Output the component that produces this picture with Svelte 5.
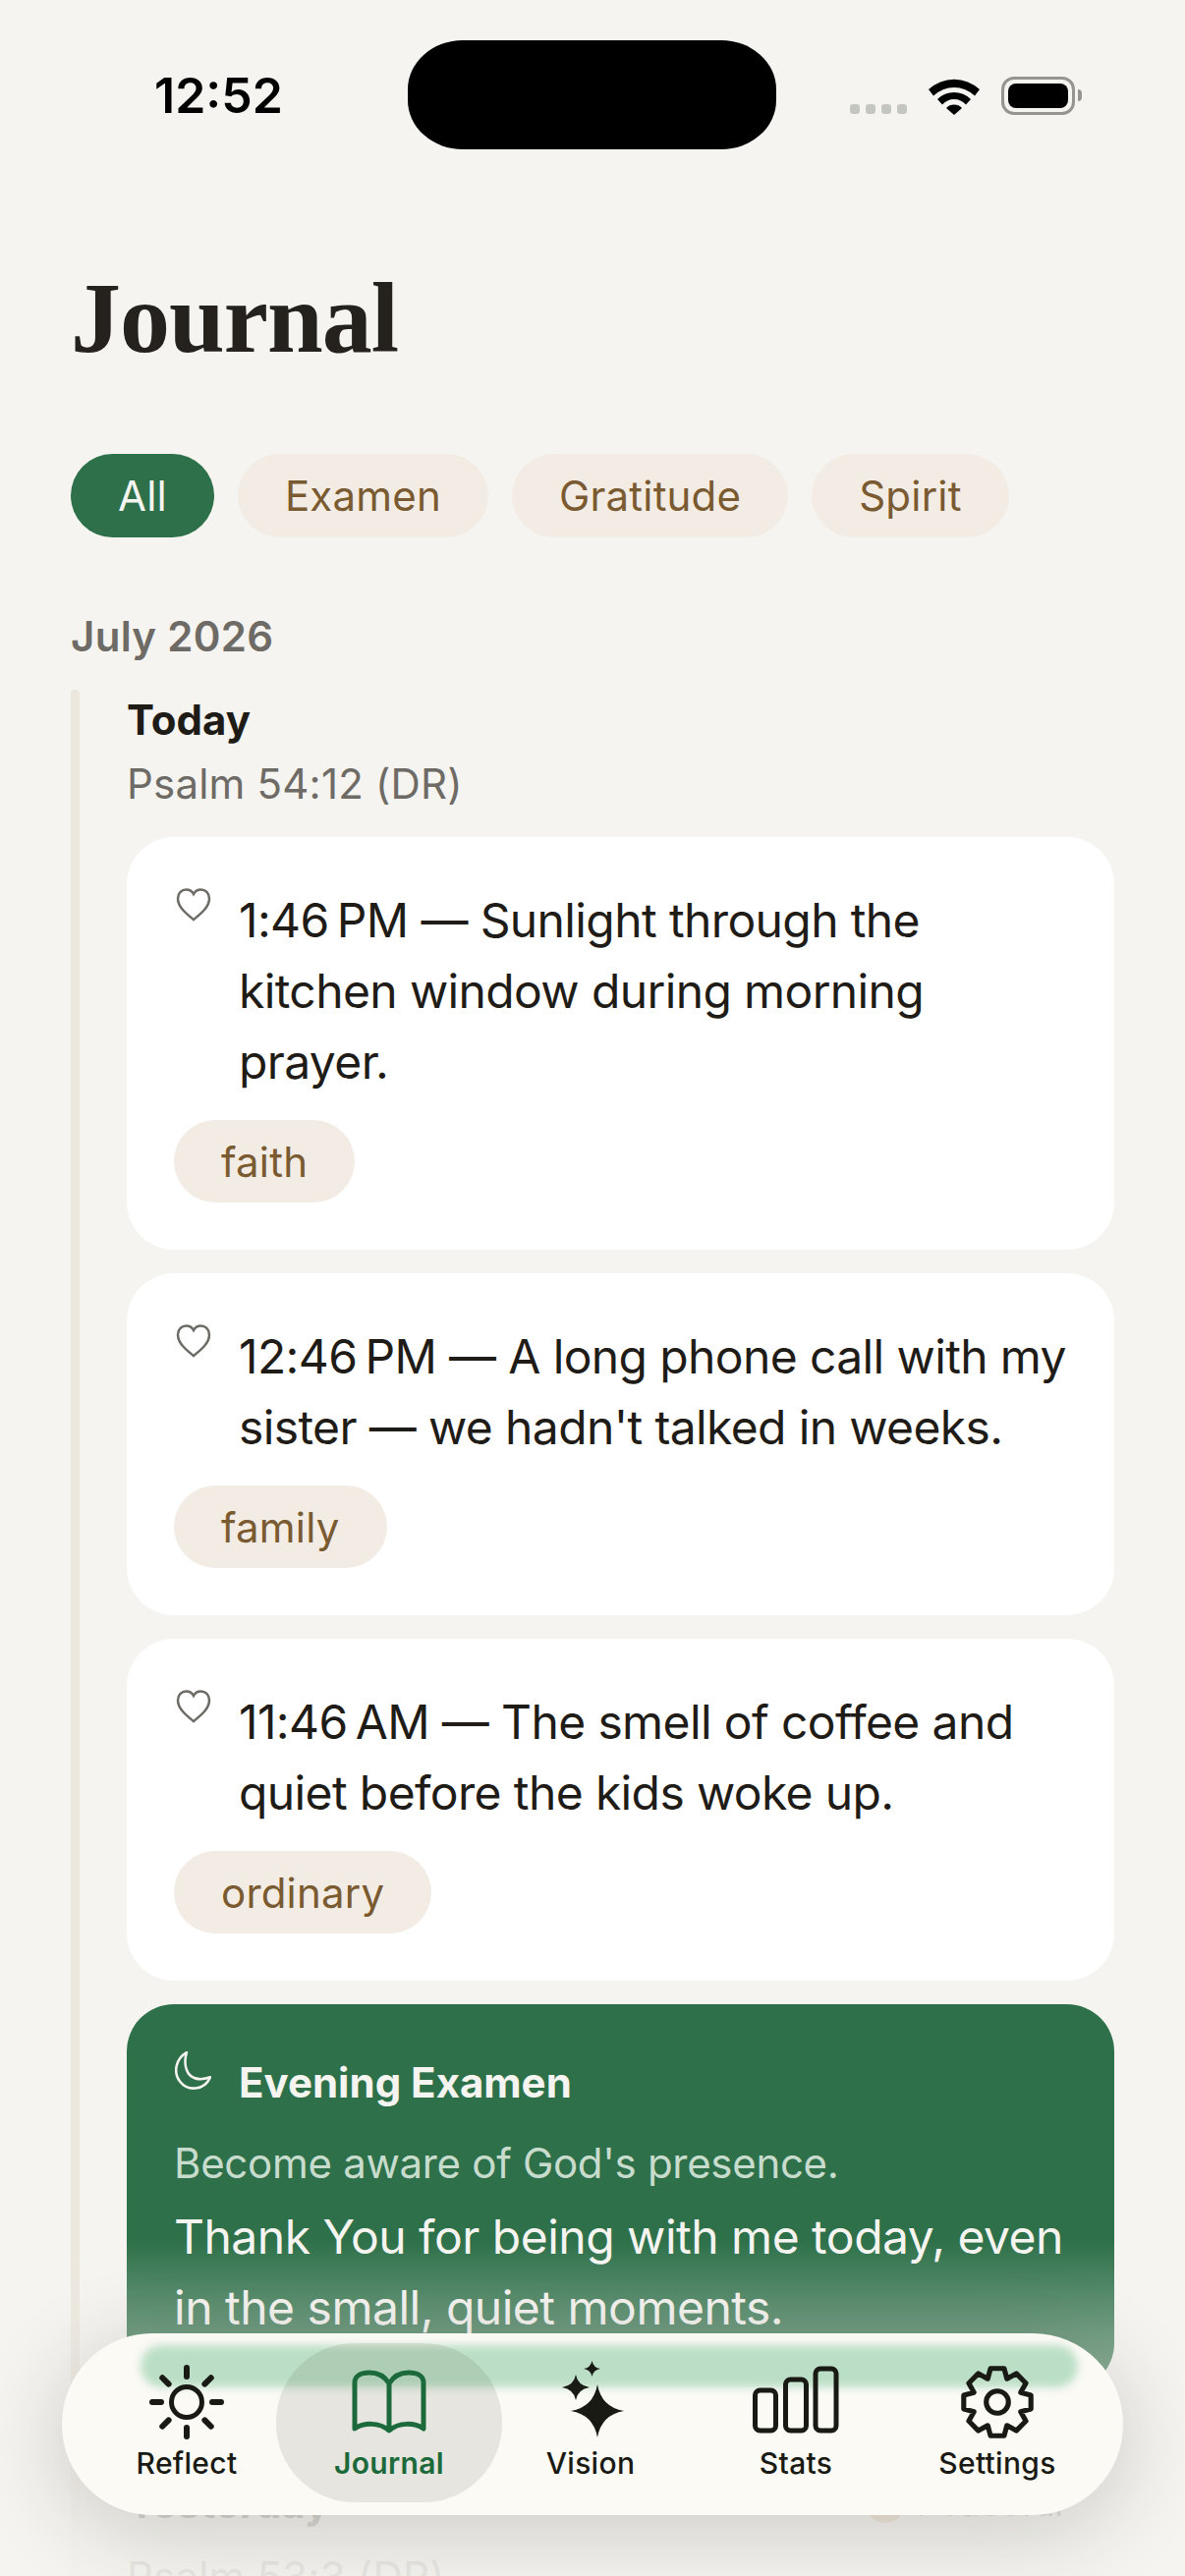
<script lang="ts">
  const filters = ['All', 'Examen', 'Gratitude', 'Spirit'];

  const entries = [
    { text: '1:46\u202fPM — Sunlight through the kitchen window during morning prayer.', tag: 'faith' },
    { text: "12:46\u202fPM — A long phone call with my sister — we hadn't talked in weeks.", tag: 'family' },
    { text: '11:46\u202fAM — The smell of coffee and quiet before the kids woke up.', tag: 'ordinary' },
  ];

  const rays = [0, 45, 90, 135, 180, 225, 270, 315];

  // 8 toothed gear, built from polar points
  function gearPath() {
    const pts = [];
    for (let i = 0; i < 8; i++) {
      const a = (i * Math.PI) / 4 - Math.PI / 2;
      const steps = [
        [-0.39, 25],
        [-0.2, 34],
        [0.2, 34],
        [0.39, 25],
      ];
      for (const [da, r] of steps) {
        pts.push((37 + r * Math.cos(a + da)).toFixed(1) + ' ' + (37 + r * Math.sin(a + da)).toFixed(1));
      }
    }
    return 'M' + pts.join('L') + 'Z';
  }
</script>

<div class="page">
  <header class="status">
    <span class="time">12:52</span>
    <div class="island"></div>
    <div class="indicators">
      <div class="dots"><i></i><i></i><i></i><i></i></div>
      <svg class="wifi" width="52" height="38" viewBox="0 0 52 38">
        <path d="M0 12 A38 38 0 0 1 52 12 L47 18.500 A30 30 0 0 0 5 18.500Z" />
        <path d="M9 22 A24 24 0 0 1 43 22 L38 27.500 A16 16 0 0 0 14 27.500Z" />
        <path d="M18 31 A11 11 0 0 1 34 31 L26 38Z" />
      </svg>
      <div class="battery"><div class="charge"></div></div>
    </div>
  </header>

  <h1 class="title">Journal</h1>

  <div class="filters">
    {#each filters as f, i}
      <span class="chip" class:active={i === 0}>{f}</span>
    {/each}
  </div>

  <h2 class="month">July 2026</h2>

  <div class="timeline">
    <div class="rail"></div>
    <div class="days">
      <div class="day-name">Today</div>
      <div class="verse">Psalm 54:12 (DR)</div>

      <div class="cards">
        {#each entries as e}
          <article class="card">
            <div class="entry">
              <svg class="heart" width="38" height="36" viewBox="0 0 38 36">
                <path d="M19 33 C13 28 3 21 3 11.500 C3 6 7 2.500 11.500 2.500 C14.500 2.500 17.500 4 19 7 C20.500 4 23.500 2.500 26.500 2.500 C31 2.500 35 6 35 11.500 C35 21 25 28 19 33Z" />
              </svg>
              <p>{e.text}</p>
            </div>
            <span class="tag">{e.tag}</span>
          </article>
        {/each}

        <article class="card examen">
          <div class="examen-head">
            <svg class="moon" width="38" height="40" viewBox="0 0 38 38" preserveAspectRatio="none">
              <path d="M13 1 C2 7 -1 20 6 29 C14 39 31 38 37 25 C25 29 16 26 13 18 C11 13 11 7 13 1Z" />
            </svg>
            <span>Evening Examen</span>
          </div>
          <div class="prompt">Become aware of God's presence.</div>
          <p class="answer">Thank You for being with me today, even in the small, quiet moments.</p>
        </article>
      </div>

      <div class="next-day">
        <div class="day-row">
          <span class="day-name">Yesterday</span>
          <span class="mood"><i></i>Peaceful</span>
        </div>
        <div class="verse">Psalm 53:3 (DR)</div>
      </div>
    </div>
  </div>

  <div class="fade"></div>

  <nav class="tabbar">
    <div class="glow"></div>
    <div class="tab">
      <svg width="76" height="76" viewBox="0 0 76 76">
        <circle cx="38" cy="38" r="15.500" fill="none" stroke="currentColor" stroke-width="5" />
        {#each rays as r}
          <line x1="38" y1="3" x2="38" y2="12" stroke="currentColor" stroke-width="6" stroke-linecap="round" transform="rotate({r} 38 38)" />
        {/each}
      </svg>
      <span>Reflect</span>
    </div>
    <div class="tab current">
      <svg width="76" height="76" viewBox="0 0 76 66">
        <path fill="none" stroke="currentColor" stroke-width="5" stroke-linejoin="round"
          d="M38 14 C33 6 26 3 18 3 C10 3 3 6 3 13 V60 C12 54 28 53 38 62 C48 53 64 54 73 60 V13 C73 6 66 3 58 3 C50 3 43 6 38 14 V62" />
      </svg>
      <span>Journal</span>
    </div>
    <div class="tab">
      <svg width="76" height="76" viewBox="0 0 76 76" fill="currentColor">
        <path d="M45 20 Q49 43 72 47 Q49 51 45 74 Q41 51 18 47 Q41 43 45 20Z" />
        <path d="M23 10 Q25 21 37 23 Q25 25 23 36 Q21 25 9 23 Q21 21 23 10Z" />
        <path d="M39.500 -4 Q41 3 48 4 Q41 5 39.500 12 Q38 5 31 4 Q38 3 39.500 -4Z" />
      </svg>
      <span>Vision</span>
    </div>
    <div class="tab">
      <svg width="88" height="76" viewBox="0 0 88 76" fill="none" stroke="currentColor" stroke-width="5">
        <rect x="2.500" y="26" width="21" height="41" rx="5" />
        <rect x="33.500" y="15" width="21" height="52" rx="5" />
        <rect x="64" y="4" width="21" height="63" rx="5" />
      </svg>
      <span>Stats</span>
    </div>
    <div class="tab">
      <svg width="76" height="76" viewBox="0 0 74 74" fill="none" stroke="currentColor" stroke-width="5" stroke-linejoin="round">
        <path d={gearPath()} />
        <circle cx="37" cy="37" r="11" />
      </svg>
      <span>Settings</span>
    </div>
  </nav>
</div>

<style>
  :global(body) {
    margin: 0;
    background: #f5f4f0;
  }

  .page {
    position: relative;
    height: 2622px;
    overflow: hidden;
    box-sizing: border-box;
    padding: 41px 72px 0;
    background: #f5f4f0;
    font-family: Inter, 'Liberation Sans', sans-serif;
    color: #1f1c18;
  }

  .status {
    display: grid;
    grid-template-columns: 343px 375px 1fr;
    align-items: center;
    margin-right: -72px;
  }

  .time {
    padding-left: 85px;
    font-size: 50px;
    font-weight: 600;
    color: #000;
  }

  .island {
    width: 375px;
    height: 111px;
    border-radius: 56px / 50px;
    background: #000;
  }

  .indicators {
    display: flex;
    align-items: flex-end;
    height: 40px;
    padding-left: 75px;
  }

  .dots {
    display: flex;
    gap: 6px;
    margin-right: 22px;
    padding-bottom: 1px;
  }

  .dots i {
    width: 10px;
    height: 10px;
    border-radius: 3px;
    background: #c3c7c0;
  }

  .wifi {
    margin-right: 22px;
  }

  .wifi path {
    fill: #000;
  }

  .battery {
    position: relative;
    box-sizing: border-box;
    width: 75px;
    height: 39px;
    padding: 4px;
    border: 3px solid #96948e;
    border-radius: 13px;
  }

  .battery::after {
    content: '';
    position: absolute;
    right: -10px;
    top: 10px;
    width: 4px;
    height: 12px;
    border-radius: 0 4px 4px 0;
    background: #96948e;
  }

  .charge {
    height: 100%;
    border-radius: 8px;
    background: #000;
  }

  .title {
    margin: 112px 0 0;
    font-family: 'Liberation Serif', serif;
    font-size: 102px;
    line-height: 120px;
    font-weight: 700;
    letter-spacing: -1px;
    color: #25221d;
  }

  .filters {
    display: flex;
    gap: 24px;
    margin-top: 78px;
  }

  .chip {
    height: 85px;
    padding: 0 48px;
    display: flex;
    align-items: center;
    border-radius: 43px;
    font-size: 42px;
    letter-spacing: 0.2px;
    color: #7a5a30;
    background: #f3ece5;
  }

  .chip.active {
    color: #f5f4f0;
    background: #2d7049;
  }

  .month {
    margin: 76px 0 0;
    font-size: 42px;
    line-height: 50px;
    font-weight: 600;
    letter-spacing: 0.3px;
    color: #6e6a65;
  }

  .timeline {
    display: flex;
    gap: 48px;
    margin-top: 29px;
  }

  .rail {
    flex: none;
    width: 9px;
    border-radius: 4px;
    background: #ece6dc;
  }

  .days {
    flex: 1;
    padding-top: 6px;
  }

  .day-name {
    font-size: 42px;
    line-height: 50px;
    font-weight: 700;
  }

  .verse {
    margin-top: 15px;
    font-size: 42px;
    line-height: 50px;
    letter-spacing: 0.2px;
    color: #6e6a65;
  }

  .cards {
    display: flex;
    flex-direction: column;
    gap: 24px;
    margin-top: 29px;
  }

  .card {
    padding: 48px;
    border-radius: 48px;
    background: #fff;
  }

  .entry {
    display: flex;
    gap: 28px;
    align-items: flex-start;
    margin-right: -14px;
  }

  .entry p {
    margin: 1px 0 -1px;
    font-size: 48px;
    line-height: 72px;
    letter-spacing: -0.62px;
  }

  .heart {
    flex: none;
    margin-top: 3px;
    transform: translateX(1px);
  }

  .heart path {
    fill: none;
    stroke: #6e6a65;
    stroke-width: 2.500;
  }

  .tag {
    display: inline-flex;
    align-items: center;
    height: 84px;
    margin-top: 24px;
    padding: 0 48px;
    border-radius: 42px;
    font-size: 42px;
    letter-spacing: 0.2px;
    color: #7a5a30;
    background: #f3ece5;
  }

  .examen {
    color: #f5f4f0;
    background: #2d7049;
  }

  .examen-head {
    display: flex;
    gap: 28px;
    align-items: center;
    height: 62px;
    font-size: 42px;
    font-weight: 700;
  }

  .moon {
    flex: none;
    margin-top: -22px;
  }

  .moon path {
    fill: none;
    stroke: #f5f4f0;
    stroke-width: 2.500;
    stroke-linejoin: round;
  }

  .prompt {
    margin-top: 22px;
    font-size: 42px;
    line-height: 60px;
    letter-spacing: -0.3px;
    color: #c8dccd;
  }

  .answer {
    margin: 9px 0 0;
    font-size: 48px;
    line-height: 72px;
    letter-spacing: -0.5px;
  }

  .next-day {
    margin-top: 82px;
  }

  .next-day .verse {
    margin-top: 17px;
  }

  .day-row {
    display: flex;
    align-items: center;
    justify-content: space-between;
    height: 66px;
    padding-right: 52px;
  }

  .mood {
    display: flex;
    align-items: center;
    gap: 12px;
    font-size: 36px;
    color: #6e6a65;
  }

  .mood i {
    width: 40px;
    height: 40px;
    border-radius: 50%;
    background: #d99a58;
  }

  .fade {
    position: absolute;
    left: 0;
    right: 0;
    top: 2280px;
    bottom: 0;
    background: linear-gradient(
      to bottom,
      rgba(245, 244, 240, 0) 0,
      rgba(245, 244, 240, 0.35) 95px,
      rgba(245, 244, 240, 0.9) 300px
    );
  }

  .tabbar {
    position: absolute;
    left: 63px;
    top: 2375px;
    width: 1080px;
    height: 185px;
    box-sizing: border-box;
    display: grid;
    grid-template-columns: 182px 230px 180px 238px 172px;
    padding: 10px 42px 13px 36px;
    border-radius: 92px;
    background: #fbfaf5;
    box-shadow: 0 16px 90px rgba(40, 36, 30, 0.2);
  }

  .glow {
    position: absolute;
    left: 80px;
    right: 46px;
    top: 12px;
    height: 43px;
    border-radius: 22px;
    background: #bbdfc6;
    filter: blur(4px);
  }

  .tab {
    position: relative;
    display: flex;
    flex-direction: column;
    align-items: center;
    padding-top: 22px;
    color: #1a1a15;
  }

  .tab svg {
    overflow: visible;
  }

  .tab span {
    margin-top: 6px;
    font-size: 30px;
    line-height: 36px;
    font-weight: 500;
    letter-spacing: 0.3px;
  }

  .tab.current {
    border-radius: 80px;
    background: rgba(50, 50, 30, 0.1);
    color: #1c6a3c;
  }

  .tab.current span {
    font-weight: 600;
  }
</style>
